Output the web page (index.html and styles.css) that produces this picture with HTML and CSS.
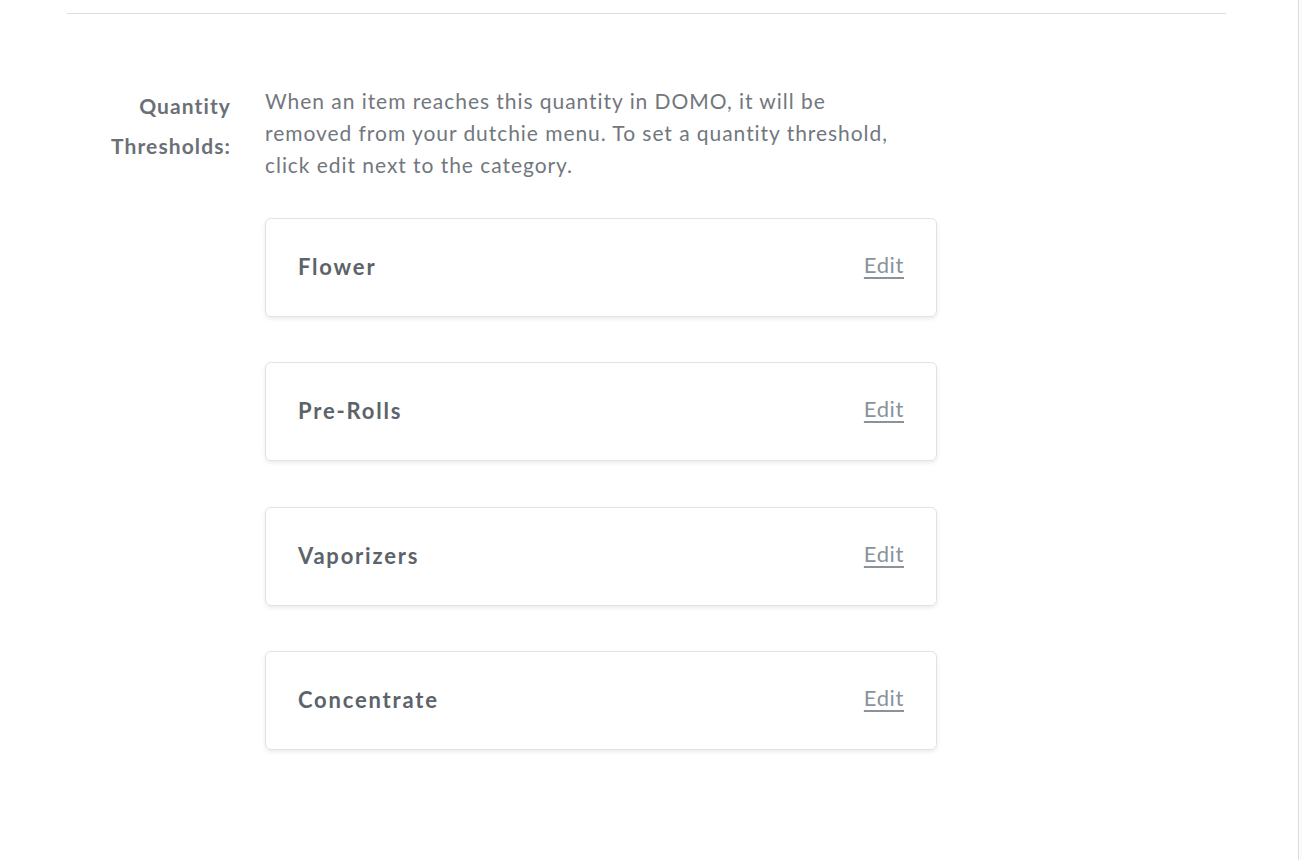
FILE: index.html
```html
<!DOCTYPE html>
<html lang="en">
<head>
<meta charset="utf-8">
<title>Quantity Thresholds</title>
<link rel="stylesheet" href="styles.css">
</head>
<body>
<div class="page">
  <main class="main">
    <div class="container">
      <hr class="divider">
      <section class="setting">
        <div class="label">Quantity<br>Thresholds:</div>
        <div class="content">
          <p class="desc">When an item reaches this quantity in DOMO, it will be removed from your dutchie menu. To set a quantity threshold, click edit next to the category.</p>
          <div class="cards">
            <div class="card"><span class="title">Flower</span><a class="edit" href="#">Edit</a></div>
            <div class="card"><span class="title">Pre-Rolls</span><a class="edit" href="#">Edit</a></div>
            <div class="card"><span class="title">Vaporizers</span><a class="edit" href="#">Edit</a></div>
            <div class="card"><span class="title">Concentrate</span><a class="edit" href="#">Edit</a></div>
          </div>
        </div>
      </section>
    </div>
  </main>
  <aside class="rail"></aside>
</div>
</body>
</html>
```
FILE: styles.css
```css
html, body {
  margin: 0;
  padding: 0;
  background: #ffffff;
  font-family: Lato, "Open Sans", "Liberation Sans", sans-serif;
}
.page {
  display: flex;
  min-height: 860px;
}
.main {
  width: 1298px;
  border-right: 1px solid #d7dce5;
}
.rail {
  flex: 1;
  background: #fbfbfc;
}
.container {
  margin: 0 72px 0 67px;
  padding-top: 13px;
}
.divider {
  margin: 0;
  border: 0;
  border-top: 1px solid #dcdfe2;
}
.setting {
  display: flex;
  padding-top: 71px;
}
.label {
  width: 164px;
  text-align: right;
  font-weight: 700;
  font-size: 21px;
  letter-spacing: 1.1px;
  line-height: 40px;
  color: #6b7077;
  margin-top: 1px;
}
.content {
  margin-left: 34px;
  width: 672px;
}
.desc {
  margin: 0;
  width: 638px;
  font-size: 21px;
  letter-spacing: 0.95px;
  line-height: 32px;
  color: #72777e;
}
.cards {
  display: flex;
  flex-direction: column;
  gap: 45.4px;
  margin-top: 37px;
}
.card {
  box-sizing: border-box;
  display: flex;
  align-items: center;
  justify-content: space-between;
  height: 99px;
  padding: 0 32px 2px 32px;
  border: 1px solid #dfe2e6;
  border-radius: 6px;
  box-shadow: 0 2px 4px rgba(0, 0, 0, 0.08);
}
.title {
  font-weight: 700;
  font-size: 22px;
  letter-spacing: 1.8px;
  color: #5c636a;
}
.edit {
  font-size: 22px;
  letter-spacing: 0.6px;
  color: #8a939c;
  text-decoration: underline;
  text-underline-offset: 4px;
  margin-top: -4px;
}
```
